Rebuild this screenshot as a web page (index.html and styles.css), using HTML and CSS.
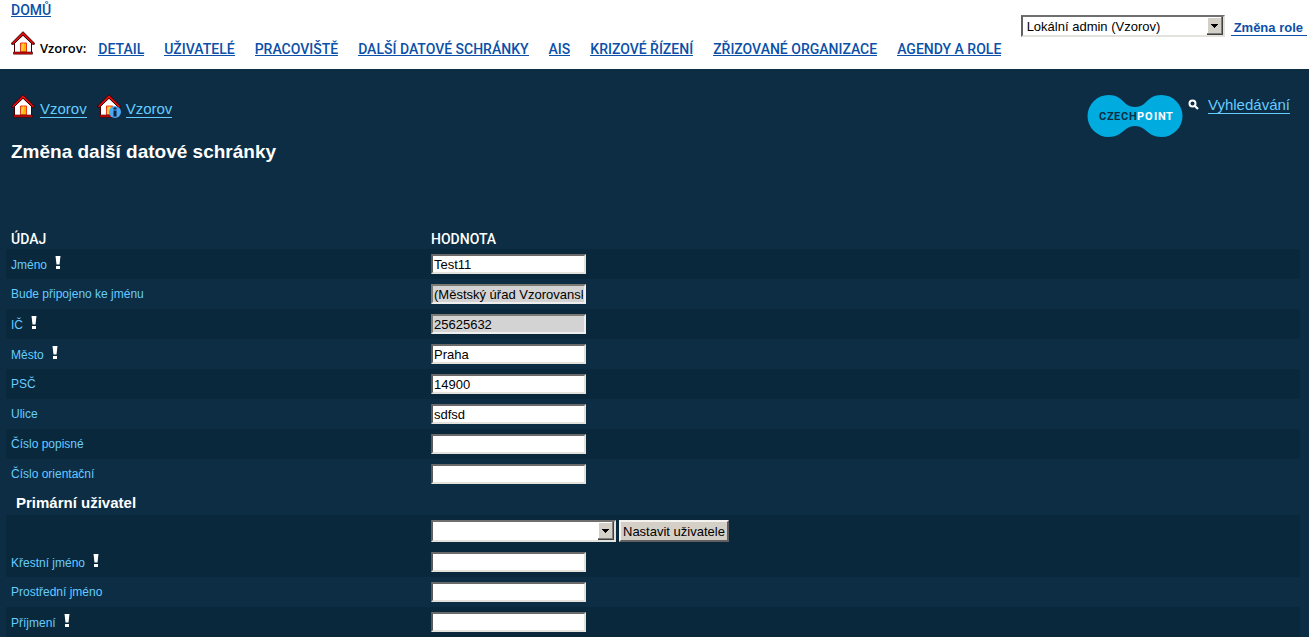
FILE: index.html
```html
<!DOCTYPE html>
<html lang="cs">
<head>
<meta charset="utf-8">
<title>Změna další datové schránky</title>
<link rel="stylesheet" href="styles.css">
</head>
<body>
<svg class="defs" width="0" height="0" aria-hidden="true">
  <symbol id="house" viewBox="0 0 24 24">
    <path d="M3.500 22V12L12 4l8.500 8v10z" fill="#fff" stroke="#400"/>
    <path d="M5 20V12.500l7-7 7 7V20z" fill="#fff"/>
    <path d="M12 .7 23.300 12v1.300h-1.800L12 4.300 2.500 13.300H.7V12z" fill="#e80808" stroke="#310808" stroke-width="1"/>
    <path d="M9.500 21v-9h6v9z" fill="#ffb400" stroke="#f03818"/>
    <path d="M10 20v-4l2-3.500h1l-1 7.500z" fill="#ffd24a"/>
    <path d="M2.500 21h19v2.200h-19z" fill="#d80808" stroke="#310808" stroke-width=".6"/>
  </symbol>
  <symbol id="bang" viewBox="0 0 6 13">
    <path d="M.500 0h5L4.500 8.500h-3z" fill="#fff"/>
    <path d="M1 10h4v3H1z" fill="#fff"/>
  </symbol>
  <symbol id="arrow" viewBox="0 0 16 18">
    <path d="M0 0h16v18H0z" fill="#404040"/>
    <path d="M0 0h15v17H0z" fill="#808080"/>
    <path d="M0 0h14v16H0z" fill="#fff"/>
    <path d="M1 1h13v15H1z" fill="#d4d0c8"/>
    <path d="M4 7h7v1h-1v1H9v1H8v1H7v-1H6V9H5V8H4z" fill="#000"/>
  </symbol>
</svg>

<header class="top">
  <div class="top-main">
    <a class="home" href="#">DOMŮ</a>
    <nav class="menu">
      <span class="place"><svg class="house"><use href="#house"/></svg><span>Vzorov:</span></span>
      <a href="#">DETAIL</a>
      <a href="#">UŽIVATELÉ</a>
      <a href="#">PRACOVIŠTĚ</a>
      <a href="#">DALŠÍ DATOVÉ SCHRÁNKY</a>
      <a href="#">AIS</a>
      <a href="#">KRIZOVÉ ŘÍZENÍ</a>
      <a href="#">ZŘIZOVANÉ ORGANIZACE</a>
      <a href="#">AGENDY A ROLE</a>
    </nav>
  </div>
  <form class="role">
    <span class="select role-select">
      <select aria-label="Role"><option>Lokální admin (Vzorov)</option></select>
      <svg class="arrow"><use href="#arrow"/></svg>
    </span>
    <a href="#">Změna role</a>
  </form>
</header>

<main class="page">
  <div class="bar">
    <div class="crumbs">
      <a href="#"><svg class="house"><use href="#house"/></svg><span>Vzorov</span></a>
      <a href="#"><svg class="house" viewBox="0 0 24 24"><use href="#house" width="24" height="24"/><circle cx="18" cy="18" r="6" fill="#4aa8f8"/><path d="M16.500 13.500h3v2h-3zM16.500 16.500h3v6h-3z" fill="#123"/></svg><span>Vzorov</span></a>
    </div>
    <div class="tools">
      <svg class="logo" viewBox="0 0 96 44" role="img" aria-label="CzechPoint">
        <path d="M21.500 1C31 1 35 6 39 10 44 14 52 14 57 10 61 6 65 1 74.500 1A21 21 0 0 1 74.500 43C65 43 61 38 57 35 52 31 44 31 39 35 35 38 31 43 21.500 43A21 21 0 0 1 21.500 1Z" fill="#00abdf"/>
        <text class="logo-text" y="26"><tspan x="12" fill="#0c2d44">C</tspan><tspan x="20" fill="#0c2d44">Z</tspan><tspan x="27" fill="#0c2d44">E</tspan><tspan x="34" fill="#0c2d44">C</tspan><tspan x="42" fill="#0c2d44">H</tspan><tspan x="50" fill="#fff">P</tspan><tspan x="58" fill="#fff">O</tspan><tspan x="67" fill="#fff">I</tspan><tspan x="71" fill="#fff">N</tspan><tspan x="79" fill="#fff">T</tspan></text>
      </svg>
      <svg class="lens" viewBox="0 0 11 11"><circle cx="4.500" cy="4.500" r="3" fill="none" stroke="#fff" stroke-width="2"/><path d="m7 7 3 3" stroke="#fff" stroke-width="2.200"/></svg>
      <a href="#">Vyhledávání</a>
    </div>
  </div>
  <h1>Změna další datové schránky</h1>

  <form>
    <table class="fields">
      <thead><tr><th>ÚDAJ</th><th>HODNOTA</th></tr></thead>
      <tbody>
        <tr class="dark"><td><label for="f1">Jméno <svg class="bang"><use href="#bang"/></svg></label></td><td><input id="f1" type="text" value="Test11"></td></tr>
        <tr><td><label for="f2">Bude připojeno ke jménu</label></td><td><input id="f2" type="text" value="(Městský úřad Vzorovanský)" readonly></td></tr>
        <tr class="dark"><td><label for="f3">IČ <svg class="bang"><use href="#bang"/></svg></label></td><td><input id="f3" type="text" value="25625632" readonly></td></tr>
        <tr><td><label for="f4">Město <svg class="bang"><use href="#bang"/></svg></label></td><td><input id="f4" type="text" value="Praha"></td></tr>
        <tr class="dark"><td><label for="f5">PSČ</label></td><td><input id="f5" type="text" value="14900"></td></tr>
        <tr><td><label for="f6">Ulice</label></td><td><input id="f6" type="text" value="sdfsd"></td></tr>
        <tr class="dark"><td><label for="f7">Číslo popisné</label></td><td><input id="f7" type="text"></td></tr>
        <tr><td><label for="f8">Číslo orientační</label></td><td><input id="f8" type="text"></td></tr>
        <tr class="section"><th colspan="2">Primární uživatel</th></tr>
        <tr class="dark picker"><td></td><td><div class="pick">
          <span class="select user-select"><select aria-label="Uživatel"><option></option></select><svg class="arrow"><use href="#arrow"/></svg></span>
          <button type="button">Nastavit uživatele</button></div></td></tr>
        <tr class="dark"><td><label for="f9">Křestní jméno <svg class="bang"><use href="#bang"/></svg></label></td><td><input id="f9" type="text"></td></tr>
        <tr><td><label for="f10">Prostřední jméno</label></td><td><input id="f10" type="text"></td></tr>
        <tr class="dark"><td><label for="f11">Příjmení <svg class="bang"><use href="#bang"/></svg></label></td><td><input id="f11" type="text"></td></tr>
      </tbody>
    </table>
  </form>
</main>
</body>
</html>
```
FILE: styles.css
```css
* { box-sizing: border-box; }
body {
  margin: 0;
  min-height: 100vh;
  background: #0c2d44;
  font-family: "Liberation Sans", Arial, sans-serif;
  font-size: 13px;
  color: #fff;
}
.defs { position: absolute; }
.top {
  display: flex;
  justify-content: space-between;
  height: 69px;
  padding: 2px 2px 0 11px;
  background: #fff;
  color: #000;
  font-weight: bold;
  line-height: 15px;
  white-space: nowrap;
}
.top a {
  color: #0b50a8;
  text-decoration: none;
  border-bottom: 1px solid #0b50a8;
}
.top-main { display: flex; flex-direction: column; align-items: flex-start; padding-top: 2px; }
.menu { display: flex; align-items: flex-end; gap: 20px; margin-top: 14px; }
.home, .menu a { font: 500 14px/12px Roboto, "Liberation Sans", sans-serif; }
.place {
  display: flex;
  align-items: flex-start;
  gap: 5px;
  margin-right: -8px;
  font-family: "Open Sans", sans-serif;
  font-weight: 600;
}
.place span { margin-top: 10px; }
.house { width: 24px; height: 24px; flex: none; }
.role { display: flex; align-items: flex-start; gap: 6px; padding-top: 13px; }
.role a { margin-top: 5px; padding: 0 4px 0 3px; }

.select { position: relative; display: block; }
select {
  appearance: none;
  display: block;
  width: 100%;
  height: 22px;
  margin: 0;
  padding: 0 20px 0 4px;
  border: 2px solid;
  border-color: #707070 #e4e2dc #e4e2dc #606060;
  border-radius: 0;
  background: #fff;
  color: #000;
  font: 13px "Liberation Sans", Arial, sans-serif;
}
.arrow { position: absolute; top: 2px; right: 2px; width: 16px; height: 18px; }
.role-select { width: 204px; }
.user-select { width: 185px; }

.page a { color: #6cf; text-decoration: none; }
.page .crumbs a, .page .tools a { font-size: 15px; }
.bar { display: flex; justify-content: space-between; padding: 25px 19px 0 11px; height: 71px; }
.crumbs { display: flex; gap: 10px; align-items: flex-start; }
.crumbs a { display: flex; align-items: flex-end; gap: 5px; }
.crumbs span, .tools a { line-height: 16px; border-bottom: 1px solid #6cf; }
.tools { display: flex; align-items: flex-start; }
.logo { width: 96px; height: 44px; }
.logo-text { font: bold 11px Roboto, sans-serif; }
.lens { width: 11px; height: 11px; margin: 5px 9px 0 5px; }
.tools a { margin-top: 3px; }
h1 { margin: 0 11px; font-size: 19px; line-height: 24px; }

.fields {
  width: calc(100% - 15px);
  margin: 62px 9px 0 6px;
  border-collapse: collapse;
  table-layout: fixed;
}
.fields thead th { height: 23px; padding: 2px 5px 0; text-align: left; font: 500 14px Roboto, "Liberation Sans", sans-serif; }
.fields th:first-child { width: 420px; }
.fields td { height: 30px; padding: 0 5px; color: #6cf; font-size: 12px; }
.dark { background: #0a283b; }
.fields .section th { height: 26px; padding: 0 10px; text-align: left; font-size: 15px; }
.fields .picker td { height: 32px; }
.bang { width: 6px; height: 13px; margin-left: 5px; }
input {
  display: block;
  width: 155px;
  height: 20px;
  margin: 0;
  padding: 0 1px;
  border: 2px solid;
  border-color: #6a6a6a #e4e2dc #e4e2dc #5a5a5a;
  background: #fff;
  color: #000;
  font: 13px "Liberation Sans", Arial, sans-serif;
}
input:read-only { background: #d3d3d3; border-color: #7c7872 #eee #eee #7c7872; }
.pick { display: flex; gap: 3px; }
button {
  height: 22px;
  padding: 0 2px;
  border: 2px solid;
  border-color: #f4f2ee #606060 #606060 #f4f2ee;
  background: #d4d0c8;
  color: #000;
  font: 13px "Liberation Sans", Arial, sans-serif;
}
```
